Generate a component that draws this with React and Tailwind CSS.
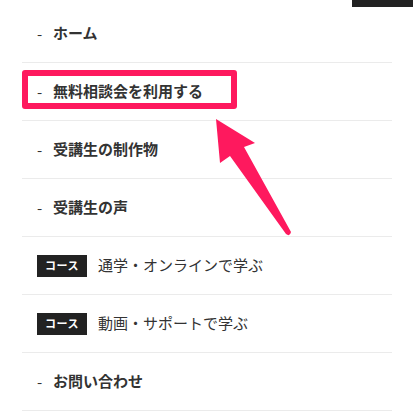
import React from "react";

const items = [
  { label: "ホーム" },
  { label: "無料相談会を利用する" },
  { label: "受講生の制作物" },
  { label: "受講生の声" },
  { label: "通学・オンラインで学ぶ", course: true },
  { label: "動画・サポートで学ぶ", course: true },
  { label: "お問い合わせ" },
];

function NavItem({ label, course }) {
  return (
    <li className="h-[58px] border-b border-[#ebebeb] flex items-center pl-[15px]">
      {course ? (
        <>
          <span className="w-[50px] h-[22px] bg-[#222] text-white text-[11px] font-bold flex items-center justify-center tracking-[0.5px]">
            コース
          </span>
          <span className="ml-[11px] text-[15px] text-[#333]">{label}</span>
        </>
      ) : (
        <>
          <span className="text-[15px] text-[#333] w-[16px] leading-none">-</span>
          <span className="text-[15px] font-semibold text-[#333]">{label}</span>
        </>
      )}
    </li>
  );
}

export default function App() {
  return (
    <div
      className="relative w-[414px] h-[418px] bg-white overflow-hidden"
      style={{ fontFamily: '"Noto Sans CJK JP", "Noto Sans", sans-serif' }}
    >
      <div className="absolute top-0 right-[1px] w-[61px] h-[7px] bg-[#222]" />

      <ul className="mx-[22px] pt-[5px]">
        {items.map((item) => (
          <NavItem key={item.label} {...item} />
        ))}
      </ul>

      {/* highlight box */}
      <div className="absolute left-[22px] top-[70px] w-[215px] h-[39px] border-[6px] border-[#fe195e] rounded-[3px]" />

      {/* arrow */}
      <svg
        className="absolute left-0 top-0"
        width="414"
        height="418"
        viewBox="0 0 414 418"
      >
        <path
          d="M216 119 L255 143 L244 147 L291 232 Q290 237 286 234 L230 156 L220 163 Z"
          fill="#fe195e"
        />
      </svg>
    </div>
  );
}
